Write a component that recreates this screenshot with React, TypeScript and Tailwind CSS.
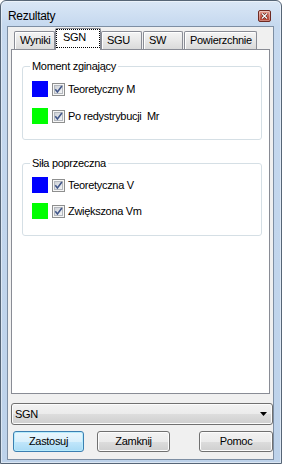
import React from "react";

function Check() {
  return (
    <svg width="13" height="13" viewBox="0 0 13 13" className="block">
      <defs>
        <linearGradient id="cbg" x1="0" y1="0" x2="1" y2="1">
          <stop offset="0" stopColor="#cbcfd5" />
          <stop offset="1" stopColor="#f6f7f8" />
        </linearGradient>
      </defs>
      <rect x="0.5" y="0.5" width="12" height="12" fill="#f6f6f6" stroke="#8e8f8f" />
      <rect x="2.5" y="2.5" width="8" height="8" fill="url(#cbg)" stroke="#b4b8be" />
      <path d="M3.3 6.3 L5.4 8.9 L9.9 3.1" fill="none" stroke="#42578a" strokeWidth="1.6" />
    </svg>
  );
}

function Row({ color, label }: { color: string; label: string }) {
  return (
    <div className="flex items-center h-[16px]">
      <div className="w-[16px] h-[16px]" style={{ background: color }} />
      <div className="ml-[4px]">
        <Check />
      </div>
      <span className="ml-[3px] whitespace-pre leading-[13px]">{label}</span>
    </div>
  );
}

function Tab({ label, w, ml }: { label: string; w: string; ml?: string }) {
  return (
    <div
      className={`${w} ${ml ?? ""} h-[18px] border border-b-0 border-[#898c95] rounded-t-[2px] bg-[linear-gradient(#f4f4f4,#e8e8e8_50%,#dadada)] shadow-[inset_1px_1px_0_#ffffff] pl-[5px] pt-[2px] leading-[13px] whitespace-nowrap overflow-hidden`}
    >
      {label}
    </div>
  );
}

function Btn({
  children,
  cls,
  primary,
}: {
  children: React.ReactNode;
  cls: string;
  primary?: boolean;
}) {
  return (
    <div
      className={
        primary
          ? `${cls} h-[21px] rounded-[3px] border border-[#3c7fb1] bg-[linear-gradient(#eaf6fd,#d9f0fc_50%,#c2e7fb_50%,#a9daf5)] shadow-[inset_0_0_0_1px_#b6ecfd] flex items-center justify-center leading-[13px]`
          : `${cls} h-[21px] rounded-[3px] border border-[#707070] bg-[linear-gradient(#f2f2f2,#ebebeb_50%,#dddddd_50%,#cfcfcf)] shadow-[inset_0_0_0_1px_#fcfcfc] flex items-center justify-center leading-[13px]`
      }
    >
      {children}
    </div>
  );
}

export default function App() {
  return (
    <div className="w-[282px] h-[464px] border border-[#566576] rounded-t-[6px] bg-[linear-gradient(180deg,#dae7f6_0px,#c6d9ef_24px,#bdd2ea_100%)] shadow-[inset_0_0_0_1px_rgba(255,255,255,0.45)] flex flex-col text-[11px] tracking-[-0.3px] text-black [font-family:'Liberation_Sans',Arial,sans-serif] overflow-hidden">
      {/* title bar */}
      <div className="h-[25px] flex items-start pl-[7px] pr-[10px]">
        <span className="mt-[8px] text-[12px] leading-[14px] text-black">Rezultaty</span>
        <div className="ml-auto mt-[9px] w-[13px] h-[12px] rounded-[2px] border border-[#6e2a22] bg-[linear-gradient(#e7a597,#c85f51_50%,#b2402f)] shadow-[inset_0_0_0_1px_rgba(255,255,255,0.35)] flex items-center justify-center">
          <svg width="7" height="6" viewBox="0 0 7 6">
            <path d="M1 0.5 L6 5.5 M6 0.5 L1 5.5" stroke="#4a1610" strokeWidth="2.4" />
            <path d="M1 0.5 L6 5.5 M6 0.5 L1 5.5" stroke="#ffffff" strokeWidth="1.3" />
          </svg>
        </div>
      </div>

      {/* client */}
      <div className="ml-[6px] mr-[7px] h-[434px] border border-[#7d8ea3] bg-[#f0f0f0] flex flex-col">
        {/* tab strip */}
        <div className="mt-[1px] ml-[6px] h-[21px] flex items-end relative z-10">
          <Tab label="Wyniki" w="w-[41px]" />
          <div className="relative w-[46px] h-[22px] -mb-px border border-b-0 border-[#898c95] rounded-t-[2px] bg-white">
            <div className="absolute left-0 right-0 top-0 bottom-[2px] border border-dotted border-black" />
            <div className="pl-[7px] pt-[2px] leading-[13px]">SGN</div>
          </div>
          <Tab label="SGU" w="w-[41px]" />
          <Tab label="SW" w="w-[40px]" ml="ml-[1px]" />
          <Tab label="Powierzchnie" w="w-[73px]" ml="ml-[1px]" />
        </div>

        {/* panel */}
        <div className="ml-[3px] w-[259px] h-[345px] border border-[#898c95] bg-white pt-[9px]">
          <fieldset className="ml-[10px] w-[240px] border border-[#d5dfe5] rounded-[3px] pb-[15px]">
            <legend className="ml-[7px] px-[2px] h-[14px] leading-[14px]">Moment zginający</legend>
            <div className="pl-[9px] pt-[8px] flex flex-col gap-[11px]">
              <Row color="#0000ff" label="Teoretyczny M" />
              <Row color="#00ff00" label="Po redystrybucji  Mr" />
            </div>
          </fieldset>
          <fieldset className="mt-[16px] ml-[10px] w-[240px] border border-[#d5dfe5] rounded-[3px] pb-[16px]">
            <legend className="ml-[7px] px-[2px] h-[14px] leading-[14px]">Siła poprzeczna</legend>
            <div className="pl-[9px] pt-[7px] flex flex-col gap-[10px]">
              <Row color="#0000ff" label="Teoretyczna V" />
              <Row color="#00ff00" label="Zwiększona Vm" />
            </div>
          </fieldset>
        </div>

        {/* dropdown */}
        <div className="ml-[3px] mt-[9px] h-[22px] w-[262px] rounded-[3px] border border-[#707070] bg-[linear-gradient(#f2f2f2,#ebebeb_50%,#dddddd_50%,#cfcfcf)] shadow-[inset_0_0_0_1px_#fcfcfc] flex items-center justify-between pl-[3px] pr-[5px]">
          <span className="leading-[13px]">SGN</span>
          <svg width="7" height="4" viewBox="0 0 7 4" className="block">
            <path d="M0 0 H7 L3.5 4 Z" fill="#000" />
          </svg>
        </div>

        {/* buttons */}
        <div className="mt-[6px] flex">
          <Btn cls="ml-[5px] w-[71px]" primary>
            Zastosuj
          </Btn>
          <Btn cls="ml-[13px] w-[73px]">Zamknij</Btn>
          <Btn cls="ml-[29px] w-[74px]">Pomoc</Btn>
        </div>
      </div>
    </div>
  );
}
